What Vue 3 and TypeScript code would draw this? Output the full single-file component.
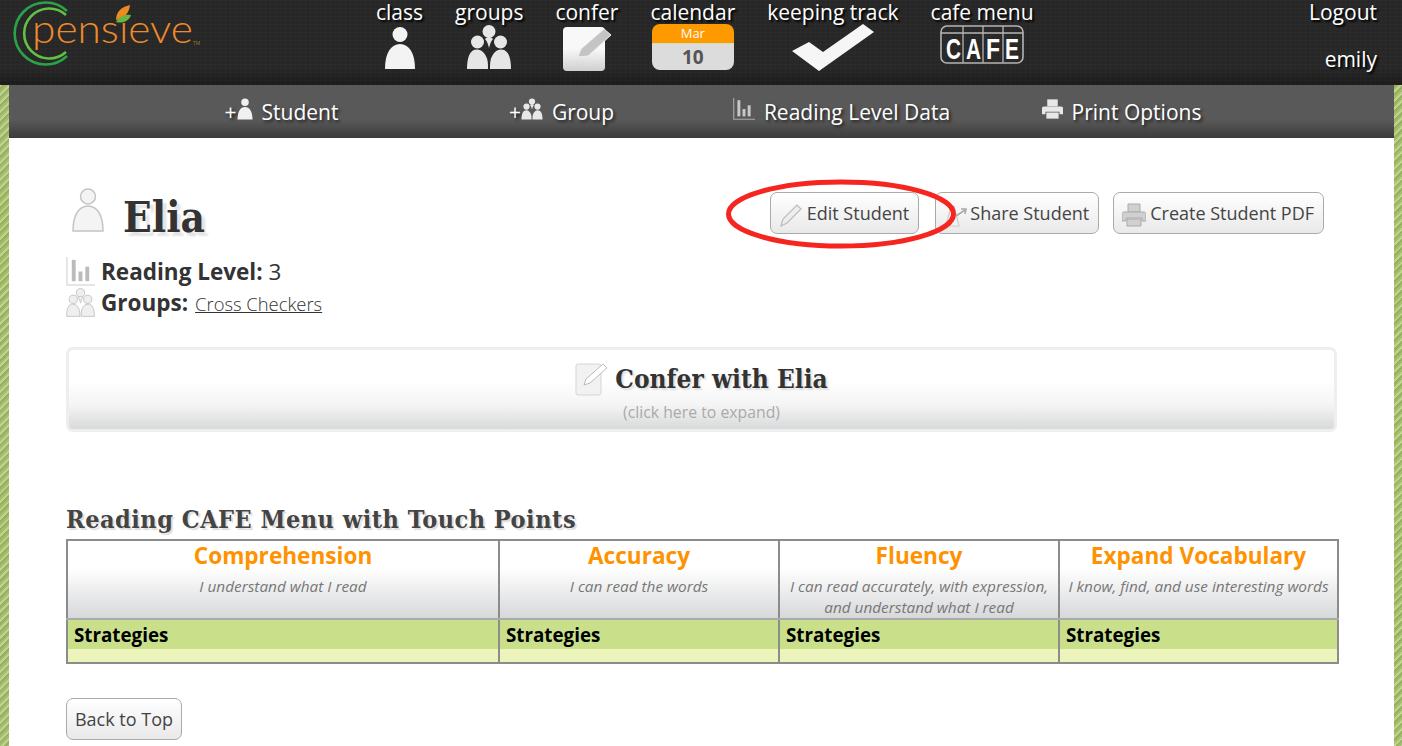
<script setup lang="ts">
interface Col { title: string; sub: string }
const cols: Col[] = [
  { title: 'Comprehension', sub: 'I understand what I read' },
  { title: 'Accuracy', sub: 'I can read the words' },
  { title: 'Fluency', sub: 'I can read accurately, with expression, and understand what I read' },
  { title: 'Expand Vocabulary', sub: 'I know, find, and use interesting words' },
]
</script>

<template>
  <div class="page">
    <svg class="defs" aria-hidden="true">
      <symbol id="person" viewBox="0 0 32 44">
        <circle cx="16" cy="8.5" r="7.5" />
        <path d="M1 43C1 27 7 18 16 18s15 9 15 25Z" />
      </symbol>
      <symbol id="group" viewBox="0 0 46 46">
        <circle cx="23" cy="7.5" r="6.5" />
        <circle cx="11.5" cy="18" r="6.5" />
        <circle cx="34.5" cy="18" r="6.5" />
        <path d="M1 45C1 33 4 25.500 11 25.500c5 0 8 4 10 9 1 3 1 7 1 10.500Z" />
        <path d="M45 45C45 33 42 25.500 35 25.500c-5 0-8 4-10 9-1 3-1 7-1 10.500Z" />
        <path d="M19 15c1-1 3-2 4-2s3 1 4 2c-2 2-3 5-4 9-1-4-2-7-4-9Z" />
      </symbol>
      <symbol id="chart" viewBox="0 0 30 30">
        <path d="M1 0v29h29" fill="none" stroke-width="1.5" />
        <rect x="6" y="3" width="4" height="22" stroke="none" />
        <rect x="13" y="15" width="4" height="10" stroke="none" />
        <rect x="20" y="10" width="4" height="15" stroke="none" />
      </symbol>
      <symbol id="printer" viewBox="0 0 24 24">
        <path d="M6 1h12v8H6Z" />
        <path d="M2 9h20c1 0 2 1 2 2v7h-4v-3H4v3H0v-7c0-1 1-2 2-2Z" />
        <path d="M5 16h14v7H5Z" />
      </symbol>
    </svg>

    <header class="top">
      <a class="logo" aria-label="Pensieve">
        <svg width="200" height="70" viewBox="0 0 200 70">
          <path d="M67 11A31 31 0 1 0 67 56" fill="none" stroke="#2aa24a" stroke-width="2.6" />
          <path d="M66 15A25 25 0 1 0 66 52" fill="none" stroke="#63bf45" stroke-width="2.6" />
          <text x="32" y="43" class="logo-text" textLength="161" lengthAdjust="spacingAndGlyphs">pensieve</text>
          <text x="193" y="45" class="logo-tm">TM</text>
          <path d="M116 20c0-8 5-13 14-15-1 8-5 13-14 15Z" fill="#ee8a22" />
          <path d="M116 22c3-6 9-8 15-7-2 6-8 9-15 7Z" fill="#6db33f" />
        </svg>
      </a>
      <nav class="nav">
        <a class="nav-item">
          <span class="nav-label">class</span>
          <svg class="icon-person"><use href="#person" /></svg>
        </a>
        <a class="nav-item">
          <span class="nav-label">groups</span>
          <svg class="icon-group"><use href="#group" /></svg>
        </a>
        <a class="nav-item">
          <span class="nav-label">confer</span>
          <svg class="icon-note" viewBox="0 0 50 46">
            <defs>
              <linearGradient id="note-fill" x1="0" y1="0" x2="0" y2="1">
                <stop offset="0.5" stop-color="#f8f8f8" />
                <stop offset="1" stop-color="#cfcfcf" />
              </linearGradient>
            </defs>
            <rect x="1" y="1" width="42" height="44" rx="4" fill="url(#note-fill)" />
            <path d="M16 31l3-8L42 3l7 6-23 21Z" fill="#c4c4c4" stroke="#eee" stroke-width="1" />
          </svg>
        </a>
        <a class="nav-item">
          <span class="nav-label">calendar</span>
          <span class="cal">
            <span class="cal-month">Mar</span>
            <span class="cal-day">10</span>
          </span>
        </a>
        <a class="nav-item">
          <span class="nav-label">keeping track</span>
          <svg class="icon-check" viewBox="0 0 84 48">
            <path d="M1 27l17-9 14 10L72 0l11 8-55 39Z" fill="#f6f6f6" />
          </svg>
        </a>
        <a class="nav-item">
          <span class="nav-label">cafe menu</span>
          <svg class="icon-cafe" viewBox="0 0 84 39">
            <rect x="1" y="1" width="82" height="37" rx="6" fill="none" stroke="#b5b5b5" stroke-width="1.6" />
            <path d="M1 8h82M23 1v37M43 1v37M63 1v37" stroke="#b5b5b5" stroke-width="1.3" />
            <text x="6" y="34" class="cafe-l" textLength="15" lengthAdjust="spacingAndGlyphs">C</text>
            <text x="26" y="34" class="cafe-l" textLength="15" lengthAdjust="spacingAndGlyphs">A</text>
            <text x="46" y="34" class="cafe-l" textLength="14" lengthAdjust="spacingAndGlyphs">F</text>
            <text x="65" y="34" class="cafe-l" textLength="14" lengthAdjust="spacingAndGlyphs">E</text>
          </svg>
        </a>
      </nav>
      <div class="user">
        <a>Logout</a>
        <a>emily</a>
      </div>
    </header>

    <div class="shell">
      <nav class="subnav">
        <a class="sub-item">+<svg class="sub-person"><use href="#person" /></svg> Student</a>
        <a class="sub-item">+<svg class="sub-group"><use href="#group" /></svg> Group</a>
        <a class="sub-item"><svg class="sub-chart"><use href="#chart" /></svg> Reading Level Data</a>
        <a class="sub-item"><svg class="sub-print"><use href="#printer" /></svg> Print Options</a>
      </nav>

      <main class="main">
        <section class="student">
          <div class="identity">
            <svg class="big-person"><use href="#person" /></svg>
            <h1>Elia</h1>
          </div>
          <div class="actions">
            <button class="btn first">
              <svg class="btn-ico" viewBox="0 0 24 24">
                <path d="M2 23l2-7L18 2l4 4L8 20Z" fill="#eee" stroke="#bbb" stroke-width="1.2" />
              </svg>
              Edit Student
            </button>
            <button class="btn share">
              <svg class="btn-ico" viewBox="0 0 24 24">
                <path d="M2 23 7 3h3l5 20Z" fill="#f2f2f2" stroke="#ccc" stroke-width="1.2" />
                <path d="M12 13l9-6M17 6l5 0-1 5" fill="none" stroke="#aaa" stroke-width="1.6" />
              </svg>
              Share Student
            </button>
            <button class="btn">
              <svg class="btn-ico print"><use href="#printer" /></svg>
              Create Student PDF
            </button>
          </div>
        </section>

        <div class="meta">
          <div class="meta-row">
            <svg class="meta-ico chart"><use href="#chart" /></svg>
            <b>Reading Level:</b> <span class="val">3</span>
          </div>
          <div class="meta-row">
            <svg class="meta-ico"><use href="#group" /></svg>
            <b>Groups:</b> <a class="link">Cross Checkers</a>
          </div>
        </div>

        <div class="confer">
          <div class="confer-title">
            <svg class="confer-ico" viewBox="0 0 34 34">
              <rect x="1" y="2" width="25" height="31" rx="2" fill="#f2f2f2" stroke="#d5d5d5" />
              <path d="M9 23l2-6L28 2l4 4-17 15Z" fill="#fff" stroke="#bbb" />
            </svg>
            <h2>Confer with Elia</h2>
          </div>
          <div class="confer-hint">(click here to expand)</div>
        </div>

        <h3 class="menu-title">Reading CAFE Menu with Touch Points</h3>
        <table class="menu">
          <colgroup>
            <col class="c1" /><col class="c2" /><col class="c2" /><col class="c3" />
          </colgroup>
          <thead>
            <tr>
              <th v-for="c in cols" :key="c.title">
                <div class="th-title">{{ c.title }}</div>
                <div class="th-sub">{{ c.sub }}</div>
              </th>
            </tr>
          </thead>
          <tbody>
            <tr class="s-head">
              <td v-for="c in cols" :key="c.title">Strategies</td>
            </tr>
            <tr class="s-body">
              <td v-for="c in cols" :key="c.title"></td>
            </tr>
          </tbody>
        </table>

        <button class="btn back">Back to Top</button>

        <svg class="ring" viewBox="0 0 232 72" aria-hidden="true">
          <ellipse cx="116" cy="36" rx="112.500" ry="32" fill="none" stroke="#f5261f" stroke-width="5" />
        </svg>
      </main>
    </div>
  </div>
</template>

<style>
html, body { margin: 0; height: 100%; overflow: hidden; }
</style>

<style scoped>
.page {
  height: 746px;
  display: flex;
  flex-direction: column;
  font-family: "Open Sans", "Liberation Sans", sans-serif;
  color: #333;
  background:
    repeating-linear-gradient(135deg, rgba(255,255,255,.28) 0 2px, rgba(70,90,40,.14) 2px 4px, transparent 4px 6px),
    #a5bf68;
}
.defs { display: none; }

.top {
  height: 85px;
  flex: none;
  display: flex;
  color: #fff;
  background-color: #242424;
  background-image:
    repeating-linear-gradient(0deg, rgba(255,255,255,.016) 0 1px, transparent 1px 4px),
    repeating-linear-gradient(90deg, rgba(255,255,255,.016) 0 1px, transparent 1px 5px),
    linear-gradient(#272727 80%, #1b1b1b);
}
.logo { width: 376px; flex: none; }
.logo svg { display: block; }
.logo-text { font: 300 40px Lato, "Open Sans", sans-serif; fill: #ee8a2a; }
.logo-tm { font: 400 5px "Open Sans", sans-serif; fill: #a8752f; }

.nav { display: flex; gap: 32px; }
.nav-item { display: flex; flex-direction: column; align-items: center; }
.nav-label {
  font-size: 21px;
  line-height: 24px;
  white-space: nowrap;
  text-shadow: 2px 2px 2px #000;
}
.icon-person { width: 32px; height: 44px; margin-top: 2px; fill: #f3f3f3; }
.icon-group { width: 46px; height: 46px; fill: #e6e6e6; }
.icon-note { width: 50px; height: 46px; margin-top: 2px; }
.cal {
  width: 82px;
  height: 46px;
  border-radius: 8px;
  overflow: hidden;
  display: flex;
  flex-direction: column;
  text-align: center;
}
.cal-month {
  height: 19px;
  background: #ff9900;
  border-bottom: 1px solid #cfe0b0;
  color: #fff;
  font-size: 13px;
  line-height: 19px;
}
.cal-day {
  flex: 1;
  background: #dcdcdc;
  color: #555;
  font-size: 19px;
  font-weight: 700;
  line-height: 27px;
}
.icon-check { width: 84px; height: 48px; }
.icon-cafe { width: 84px; height: 39px; margin-top: 1px; }
.cafe-l { font: 700 30px "Liberation Sans", sans-serif; fill: #fff; }

.user {
  margin-left: auto;
  padding: 0 25px 0 0;
  display: flex;
  flex-direction: column;
  align-items: flex-end;
  gap: 23px;
  font-size: 21px;
  line-height: 24px;
  text-shadow: 2px 2px 2px #000;
}

.shell {
  flex: 1;
  min-height: 0;
  margin: 0 8px 0 9px;
  display: flex;
  flex-direction: column;
}
.subnav {
  height: 53px;
  flex: none;
  display: grid;
  grid-template-columns: repeat(4, 280px);
  justify-content: center;
  align-items: center;
  color: #fff;
  font-size: 21px;
  background: linear-gradient(#595959 0 65%, #3c3c3c);
  text-shadow: 2px 2px 3px #222;
}
.sub-item { display: flex; align-items: center; justify-content: center; white-space: nowrap; }
.sub-person { width: 16px; height: 22px; fill: #f0f0f0; margin: -6px 9px 0 0; }
.sub-group { width: 22px; height: 22px; fill: #e8e8e8; margin: -6px 9px 0 0; }
.sub-chart { width: 22px; height: 22px; fill: #c8c8c8; stroke: #aaa; margin: -6px 9px 0 0; }
.sub-print { width: 21px; height: 22px; fill: #e8e8e8; margin: -6px 9px 0 0; }

.main {
  position: relative;
  flex: 1;
  background: #fff;
  padding: 54px 57px 0;
}
.student { display: flex; justify-content: space-between; height: 64px; }
.identity { display: flex; align-items: flex-start; }
.big-person {
  width: 32px;
  height: 44px;
  margin: -4px 0 0 6px;
  fill: #f4f4f4;
  stroke: #c4c4c4;
  stroke-width: 1.5;
}
h1 {
  margin: 0 0 0 19px;
  font: 700 42px/52px "DejaVu Serif", serif;
  font-stretch: condensed;
  color: #333;
  text-shadow: 4px 4px 2px #e4e4e4;
}
.actions { display: flex; gap: 14px; padding-right: 13px; height: 42px; }
.btn {
  display: inline-flex;
  align-items: center;
  height: 42px;
  box-sizing: border-box;
  padding: 0 9px 0 8px;
  gap: 4px;
  border: 1px solid #aaa;
  border-radius: 7px;
  background: linear-gradient(#fff, #e9e9e9);
  font: 400 18px "Open Sans", sans-serif;
  color: #444;
  white-space: nowrap;
}
.btn.first { margin-right: 2px; }
.btn.share { gap: 2px; }
.btn-ico { width: 24px; height: 24px; margin-top: 3px; }
.btn-ico.print { fill: #d0d0d0; stroke: #aaa; }

.meta-row {
  display: flex;
  align-items: baseline;
  gap: 6px;
  height: 31px;
  line-height: 31px;
  font-size: 22.5px;
  color: #333;
}
.meta-row b { font-weight: 700; }
.meta-ico {
  width: 29px;
  height: 29px;
  align-self: center;
  fill: #efefef;
  stroke: #c4c4c4;
  stroke-width: 1.5;
  flex: none;
}
.meta-ico.chart { fill: #bbb; stroke: #ddd; }
.val { font-weight: 400; }
.link { font-size: 18.4px; font-weight: 300; text-decoration: underline; margin-left: 1px; }

.confer {
  margin-top: 29px;
  height: 85px;
  box-sizing: border-box;
  border: 3px solid #eee;
  border-radius: 7px;
  background: linear-gradient(#fff 40%, #f4f4f4 70%, #d8d9da);
  text-align: center;
}
.confer-title {
  display: flex;
  justify-content: center;
  align-items: center;
  gap: 6px;
  padding-top: 12px;
  height: 34px;
}
.confer-ico { width: 34px; height: 34px; }
h2 {
  margin: 0;
  font: 700 26px/34px "DejaVu Serif", serif;
  font-stretch: condensed;
  color: #333;
  text-shadow: 2px 2px 2px #ddd;
}
.confer-hint { margin-top: 6px; font-size: 15.8px; line-height: 20px; color: #aaa; }

.menu-title {
  margin: 72px 0 0;
  font: 700 25px/32px "DejaVu Serif", serif;
  font-stretch: condensed;
  letter-spacing: .5px;
  color: #444;
  text-shadow: 2px 2px 1px #ddd;
}
.menu {
  width: 1271px;
  margin-top: 3px;
  table-layout: fixed;
  border-collapse: collapse;
  border: 2px solid #8c8c8c;
}
.c1 { width: 432px; }
.c2 { width: 280px; }
.c3 { width: 279px; }
th {
  height: 79px;
  box-sizing: border-box;
  padding: 1px 4px 0;
  vertical-align: top;
  border-left: 2px solid #8c8c8c;
  border-bottom: 2px solid #aaa;
  background: linear-gradient(#fff 35%, #d7d8da);
  font-weight: 400;
}
.th-title { font-size: 22.6px; font-weight: 700; line-height: 28px; color: #ff9200; }
.th-sub { margin-top: 6px; font-size: 15.35px; line-height: 21px; font-style: italic; color: #777; }
.s-head td {
  height: 29px;
  padding: 0 0 0 6px;
  border-left: 2px solid #8c8c8c;
  background: #c9df8a;
  color: #000;
  font-size: 18.8px;
  font-weight: 700;
}
.s-body td {
  height: 13px;
  padding: 0;
  border-left: 2px solid #8c8c8c;
  background: #ecf4bc;
}
.back { margin-top: 34px; width: 116px; justify-content: center; padding: 0; display: flex; }

.ring {
  position: absolute;
  left: 716px;
  top: 40px;
  width: 232px;
  height: 72px;
  pointer-events: none;
}
</style>
